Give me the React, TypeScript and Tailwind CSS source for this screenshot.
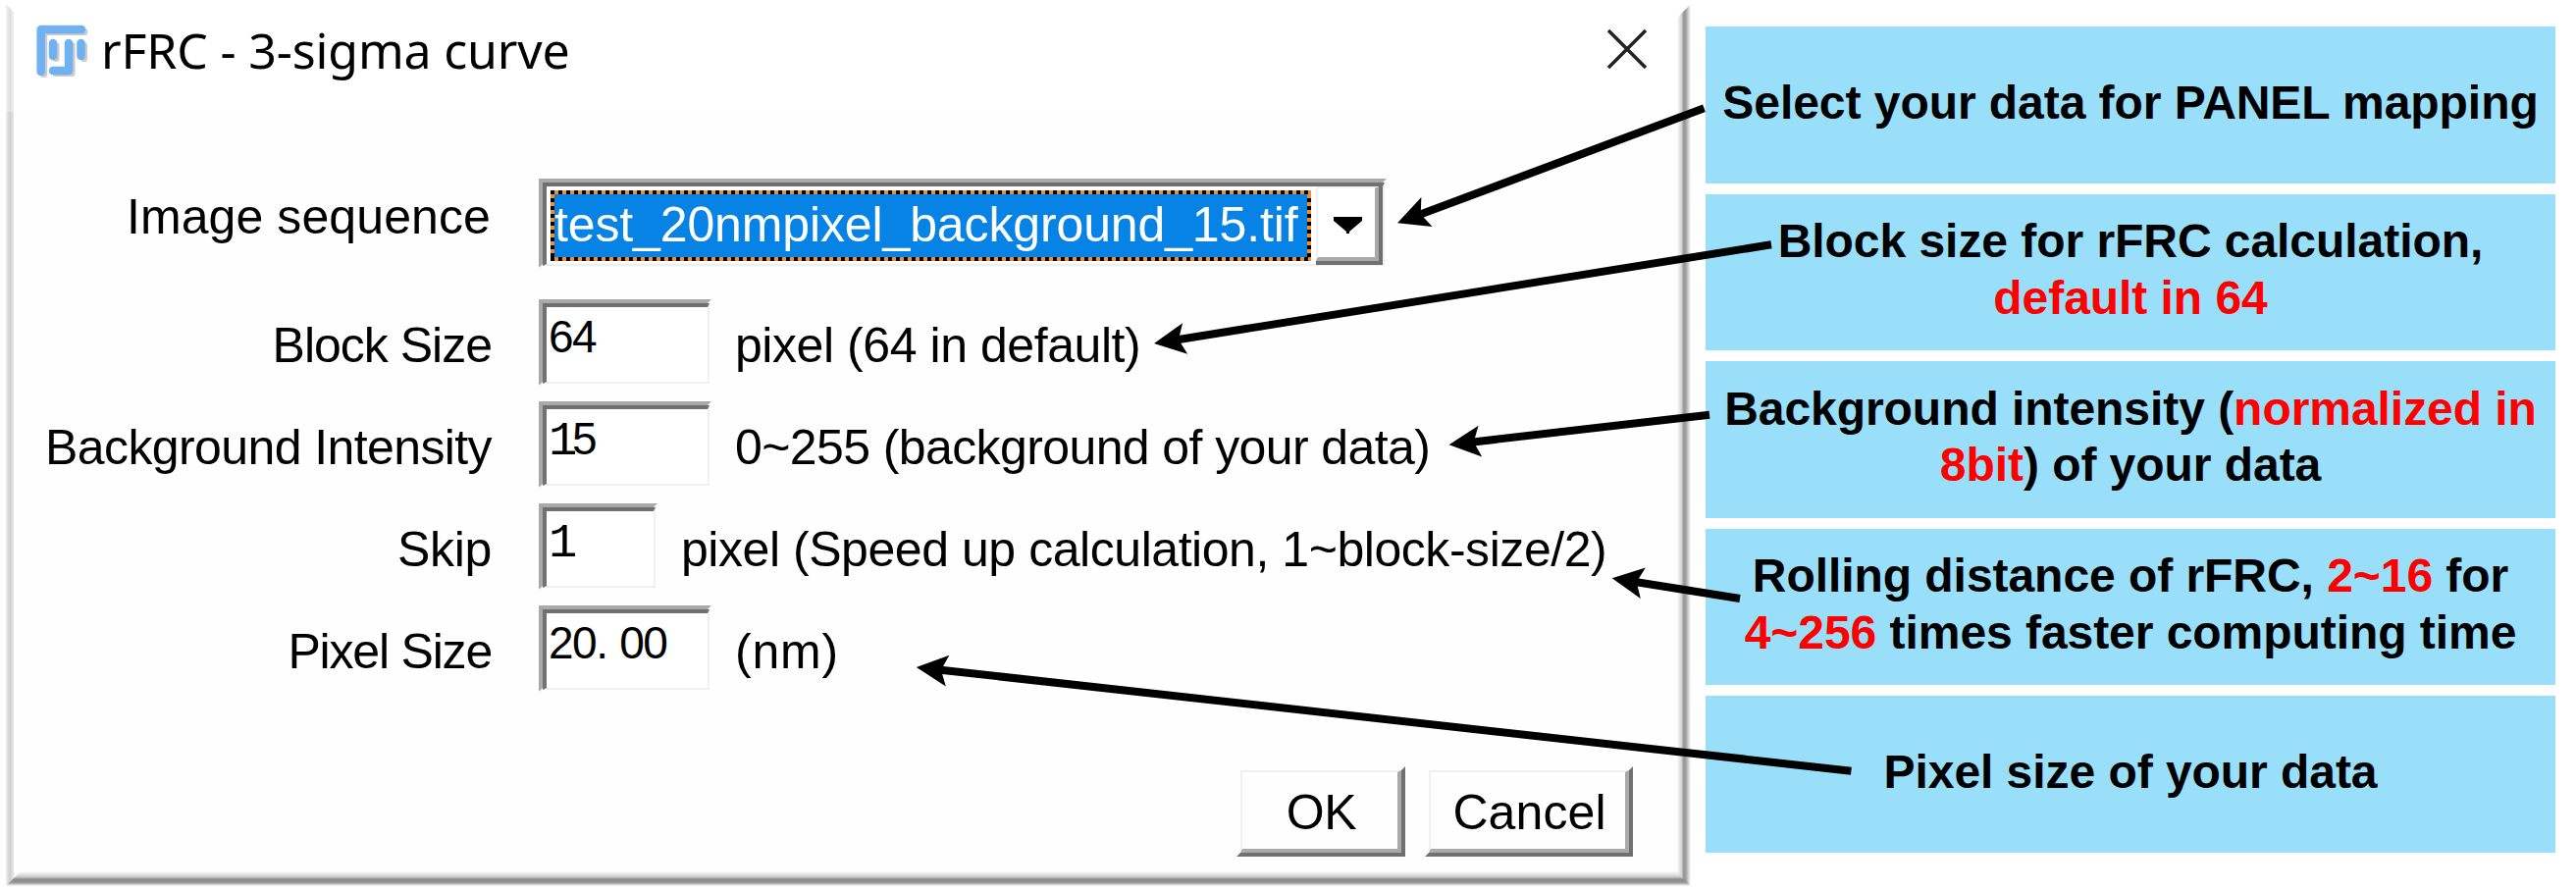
import React from "react";

const ARROWS: { tip: [number, number]; end: [number, number] }[] = [
  { tip: [1424, 227.3], end: [1736.5, 110.3] },
  { tip: [1176, 350], end: [1805, 249.3] },
  { tip: [1476.6, 453.3], end: [1742, 422.7] },
  { tip: [1642.7, 589.3], end: [1773, 610] },
  { tip: [933.8, 680], end: [1886.4, 785.7] },
];

function Arrow({ tip, end }: { tip: [number, number]; end: [number, number] }) {
  const dx = end[0] - tip[0];
  const dy = end[1] - tip[1];
  const length = Math.hypot(dx, dy);
  const angle = (Math.atan2(dy, dx) * 180) / Math.PI;
  return (
    <g transform={`translate(${tip[0]} ${tip[1]}) rotate(${angle})`}>
      <path d={`M0 0 L32 -16 L27 -4 L${length} -4 L${length} 4 L27 4 L32 16 Z`} />
    </g>
  );
}

function Logo() {
  const shape = (
    <>
      <path d="M5.700 48V5H47" />
      <path d="M18 19V32" />
      <path d="M18 47H34V19" />
      <path d="M46.500 19V32" />
    </>
  );
  return (
    <svg className="h-[56px] w-[56px] shrink-0" viewBox="0 0 56 56" fill="none" strokeLinecap="round" strokeLinejoin="round">
      <g stroke="#b4b4b4" strokeWidth="7" transform="translate(3 2.500)" opacity="0.7">{shape}</g>
      <g stroke="#70b1f2" strokeWidth="8.500">{shape}</g>
    </svg>
  );
}

function Field({ width, children }: { width: string; children: React.ReactNode }) {
  return (
    <div className={`${width} h-[88px] shrink-0 border-4 border-t-[#a9a9a9] border-l-[#a9a9a9] border-r-transparent border-b-transparent`}>
      <div className="-mr-[2px] -mb-[2px] h-[82px] border-t-4 border-l-4 border-r-2 border-b-2 border-t-[#707070] border-l-[#707070] border-r-[#f0f0f0] border-b-[#f0f0f0] bg-white pt-[5px] pl-[2px] font-['Liberation_Sans'] text-[46px] leading-[50px] tracking-[-1.500px] text-black">
        {children}
      </div>
    </div>
  );
}

function One() {
  return <span className="font-['Liberation_Mono'] text-[49px] leading-[40px] tracking-[-5.400px]">1</span>;
}

function Row({ label, labelTracking, children }: { label: string; labelTracking: string; children: React.ReactNode }) {
  return (
    <div className="flex h-[88px]">
      <div className={`w-[487px] shrink-0 pt-[18px] text-right ${labelTracking}`}>{label}</div>
      <div className="ml-[48px] flex">{children}</div>
    </div>
  );
}

function Note({ tracking, children }: { tracking: string; children: React.ReactNode }) {
  return <div className={`ml-[24px] pt-[18px] ${tracking}`}>{children}</div>;
}

function PushButton({ width, tracking, children }: { width: string; tracking: string; children: React.ReactNode }) {
  return (
    <div className={`${width} h-[92px] border-4 border-t-white border-l-white border-r-[#707070] border-b-[#707070]`}>
      <div className={`flex h-[84px] items-center justify-center border-t-2 border-l-2 border-r-4 border-b-4 border-t-[#f0f0f0] border-l-[#f0f0f0] border-r-[#a9a9a9] border-b-[#a9a9a9] pt-[3px] pl-[3px] ${tracking}`}>
        {children}
      </div>
    </div>
  );
}

function Card({ children }: { children: React.ReactNode }) {
  return (
    <div className="flex h-[159.300px] items-center justify-center bg-[#99dffa] pb-[5px] text-center font-['Liberation_Sans'] text-[48px] leading-[57.600px] font-bold tracking-[-0.050px] whitespace-nowrap text-black">
      <div>{children}</div>
    </div>
  );
}

function Red({ children }: { children: React.ReactNode }) {
  return <span className="text-[#ff0000]">{children}</span>;
}

export default function App() {
  return (
    <div className="relative flex h-[907px] w-[2625px] overflow-hidden bg-white">
      <div className="flex h-[907px] w-[1725px] shrink-0 flex-col pt-[4px] pl-[6px]">
        <div className="flex h-[884px]">
          <div className="flex w-[8px] shrink-0 flex-col [clip-path:polygon(0_0,100%_8px,100%_100%,0_100%)]">
            <div className="h-[110px] bg-linear-to-r from-[#f4f4f4] via-[#dedede] to-[#f0f0f0]" />
            <div className="flex-1 bg-linear-to-r from-[#f0f0f0] via-[#cecece] to-[#e8e8e8]" />
          </div>
          <div className="flex w-[1695px] shrink-0 flex-col">
            <div className="flex h-[111px] shrink-0 items-start justify-between pt-[21px] pr-[30px] pl-[22px]">
              <div className="flex">
                <Logo />
                <div className="-mt-[4px] ml-[11px] font-['Noto_Sans'] text-[50px] leading-[60px] tracking-[-0.150px] whitespace-nowrap text-black">
                  rFRC - 3-sigma curve
                </div>
              </div>
              <svg className="mt-[4px] h-[42px] w-[42px]" viewBox="0 0 42 42" stroke="#222" strokeWidth="3.500" fill="none">
                <path d="M2 2L40 40M40 2L2 40" />
              </svg>
            </div>
            <div className="flex flex-1 flex-col bg-[#fefefe] pt-[67px] font-['Liberation_Sans'] text-[50px] leading-[58px] whitespace-nowrap text-black">
              <div className="flex h-[91px]">
                <div className="w-[486px] shrink-0 pt-[10px] text-right tracking-[0.100px]">Image sequence</div>
                <div className="ml-[49px] h-[91px] w-[864px] border-4 border-t-[#a9a9a9] border-l-[#a9a9a9] border-r-transparent border-b-transparent">
                  <div className="-mr-[2px] flex h-[85px] border-t-4 border-l-4 border-r-2 border-b-2 border-t-[#707070] border-l-[#707070] border-r-[#f0f0f0] border-b-[#f0f0f0] bg-white">
                    <div className="mt-[4px] ml-[4px] h-[72px] w-[776px] bg-[repeating-linear-gradient(90deg,#000_0_4px,#f08c32_4px_8px)]">
                      <div className="h-[72px] bg-[repeating-linear-gradient(180deg,#000_0_4px,#f08c32_4px_8px)] [clip-path:polygon(0_4px,100%_4px,100%_68px,0_68px)]">
                        <div className="mx-[4px] h-[72px] bg-[#0783e6] pt-[6px] tracking-[-0.130px] text-white">test_20nmpixel_background_15.tif</div>
                      </div>
                    </div>
                    <div className="ml-[5px] h-[80px] w-[68px] border-r-4 border-b-4 border-[#707070]">
                      <div className="flex h-[76px] items-center justify-center border-t-2 border-l-2 border-r-4 border-b-4 border-t-[#f4f4f4] border-l-[#f0f0f0] border-r-[#a9a9a9] border-b-[#a9a9a9] pt-[4px] pl-[2px]">
                        <svg className="h-[17px] w-[29px]" viewBox="0 0 29 17" fill="#000">
                          <path d="M0 0H29V4L16 15V17H13V15L0 4Z" />
                        </svg>
                      </div>
                    </div>
                  </div>
                </div>
              </div>
              <div className="mt-[32px] flex flex-col gap-[16px]">
                <Row label="Block Size" labelTracking="tracking-[-1.000px]">
                  <Field width="w-[176px]">64</Field>
                  <Note tracking="tracking-[-0.440px]">pixel (64 in default)</Note>
                </Row>
                <Row label="Background Intensity" labelTracking="tracking-[-0.600px]">
                  <Field width="w-[176px]"><One />5</Field>
                  <Note tracking="tracking-[-0.600px]">0~255 (background of your data)</Note>
                </Row>
                <Row label="Skip" labelTracking="tracking-[-0.300px]">
                  <Field width="w-[121px]"><One /></Field>
                  <Note tracking="tracking-[-0.450px]">pixel (Speed up calculation, 1~block-size/2)</Note>
                </Row>
                <Row label="Pixel Size" labelTracking="tracking-[-1.200px]">
                  <Field width="w-[176px]">20<span className="tracking-[11.200px]">.</span>00</Field>
                  <Note tracking="tracking-[0.800px]">(nm)</Note>
                </Row>
              </div>
              <div className="mt-[76px] flex justify-end gap-[20px] pr-[45px]">
                <PushButton width="w-[172px]" tracking="tracking-[-0.300px]">OK</PushButton>
                <PushButton width="w-[212px]" tracking="tracking-[0.100px]">Cancel</PushButton>
              </div>
            </div>
          </div>
          <div className="w-[14px] shrink-0 bg-[linear-gradient(90deg,#fdfdfd,#d8d8d8_30%,#929292_50%,#a4a4a4_65%,#ffffff)] [clip-path:polygon(0_14px,100%_0,100%_100%,0_100%)]" />
        </div>
        <div className="flex h-[15px] w-[1717px]">
          <div className="w-[15px] bg-[linear-gradient(90deg,#f0f0f0,#cecece_4px,#e8e8e8_8px,#fefefe_9px)] [clip-path:polygon(0_0,100%_0,100%_100%,0_100%)]">
            <div className="h-[15px] bg-[linear-gradient(180deg,#fdfdfd,#d0d0d0_35%,#8c8c8c_55%,#949494_75%,#ffffff)] [clip-path:polygon(100%_0,100%_100%,0_100%)]" />
          </div>
          <div className="flex-1 bg-[linear-gradient(180deg,#fdfdfd,#d0d0d0_35%,#8c8c8c_55%,#949494_75%,#ffffff)]" />
          <div className="w-[14px] rounded-br-[5px] bg-[linear-gradient(90deg,#fdfdfd,#d8d8d8_30%,#929292_50%,#a4a4a4_65%,#ffffff)]">
            <div className="h-[15px] bg-[linear-gradient(180deg,#fdfdfd,#d0d0d0_35%,#8c8c8c_55%,#949494_75%,#ffffff)] [clip-path:polygon(0_0,100%_100%,0_100%)]" />
          </div>
        </div>
      </div>
      <div className="ml-[13px] flex w-[866px] flex-col gap-[11.200px] pt-[27.300px]">
        <Card>Select your data for PANEL mapping</Card>
        <Card>
          Block size for rFRC calculation,
          <br />
          <Red>default in 64</Red>
        </Card>
        <Card>
          Background intensity (<Red>normalized in</Red>
          <br />
          <Red>8bit</Red>) of your data
        </Card>
        <Card>
          Rolling distance of rFRC, <Red>2~16</Red> for
          <br />
          <Red>4~256</Red> times faster computing time
        </Card>
        <Card>Pixel size of your data</Card>
      </div>
      <svg className="pointer-events-none absolute inset-0 h-[907px] w-[2625px]" viewBox="0 0 2625 907" fill="#000">
        {ARROWS.map((arrow, i) => (
          <Arrow key={i} tip={arrow.tip} end={arrow.end} />
        ))}
      </svg>
    </div>
  );
}
